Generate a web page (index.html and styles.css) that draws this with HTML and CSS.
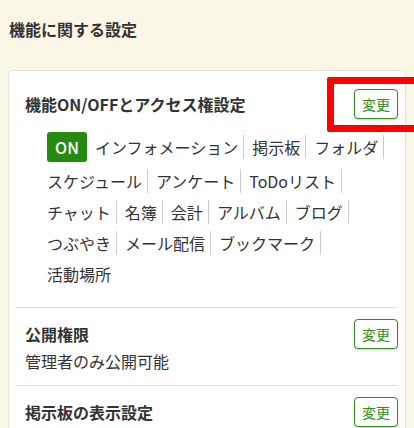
FILE: index.html
```html
<!DOCTYPE html>
<html lang="ja">
<head>
<meta charset="utf-8">
<link rel="stylesheet" href="styles.css">
</head>
<body>
<h2 class="page-title">機能に関する設定</h2>
<div class="card">
  <section class="sec sec-first">
    <div class="sec-head">
      <h3 class="sec-title">機能ON/OFFとアクセス権設定</h3>
      <button class="btn">変更</button>
    </div>
    <ul class="tags">
      <li class="badge">ON</li>
      <li class="tag">インフォメーション</li>
      <li class="tag">掲示板</li>
      <li class="tag">フォルダ</li>
      <li class="tag">スケジュール</li>
      <li class="tag">アンケート</li>
      <li class="tag">ToDoリスト</li>
      <li class="tag">チャット</li>
      <li class="tag">名簿</li>
      <li class="tag">会計</li>
      <li class="tag">アルバム</li>
      <li class="tag">ブログ</li>
      <li class="tag">つぶやき</li>
      <li class="tag">メール配信</li>
      <li class="tag">ブックマーク</li>
      <li class="tag tag-last">活動場所</li>
    </ul>
  </section>
  <section class="sec">
    <div class="sec-head">
      <h3 class="sec-title">公開権限</h3>
      <button class="btn">変更</button>
    </div>
    <p class="desc">管理者のみ公開可能</p>
  </section>
  <section class="sec">
    <div class="sec-head">
      <h3 class="sec-title">掲示板の表示設定</h3>
      <button class="btn">変更</button>
    </div>
  </section>
</div>
<div class="highlight"></div>
</body>
</html>
```

FILE: styles.css
```css
html, body {
  overflow: hidden;
}
body {
  margin: 0;
  padding: 0 8px;
  background: #faf7e7;
  font-family: "Noto Sans CJK JP", "Noto Sans", sans-serif;
  color: #333;
  position: relative;
  height: 428px;
}
.page-title {
  margin: 0;
  padding: 17px 0 0 1px;
  font-size: 16px;
  line-height: 24px;
  font-weight: bold;
  color: #333;
  height: 53px;
}
.card {
  background: #fff;
  border: 1px solid #e6e2d2;
  border-radius: 4px;
  padding: 7px 7px 0;
}
.sec {
  padding: 11px 0 11px 9px;
  border-top: 1px solid #e2dfd3;
}
.sec-first {
  border-top: none;
}
.sec-head {
  display: flex;
  justify-content: space-between;
  align-items: center;
  height: 30px;
}
.sec-title {
  margin: 0;
  font-size: 16px;
  line-height: 24px;
  font-weight: bold;
  color: #333;
}
.btn {
  width: 44px;
  height: 30px;
  padding: 0;
  border: 1px solid #2e8b1c;
  border-radius: 4px;
  background: #fff;
  color: #2e8b1c;
  font-family: inherit;
  font-size: 14px;
  line-height: 28px;
  box-shadow: 0 1px 2px rgba(0, 0, 0, 0.2);
}
.tags {
  list-style: none;
  margin: 13px 0 0 22px;
  padding: 0 0 10px;
  display: flex;
  flex-wrap: wrap;
  align-items: center;
  column-gap: 8px;
  row-gap: 7px;
}
.badge {
  width: 40px;
  height: 30px;
  background: #268a10;
  color: #fff;
  border-radius: 3px;
  text-align: center;
  font-size: 16px;
  line-height: 30px;
  font-weight: 500;
}
.tag {
  font-size: 16px;
  line-height: 24px;
  padding-right: 5px;
  border-right: 1px solid #cccccc;
}
.tag-last {
  border-right: none;
}
.desc {
  margin: 0;
  font-size: 16px;
  line-height: 24px;
  padding-bottom: 1px;
}
.highlight {
  position: absolute;
  left: 327px;
  top: 77px;
  width: 100px;
  height: 55px;
  box-sizing: border-box;
  border: 7px solid #ff0000;
  border-radius: 2px;
}
```
